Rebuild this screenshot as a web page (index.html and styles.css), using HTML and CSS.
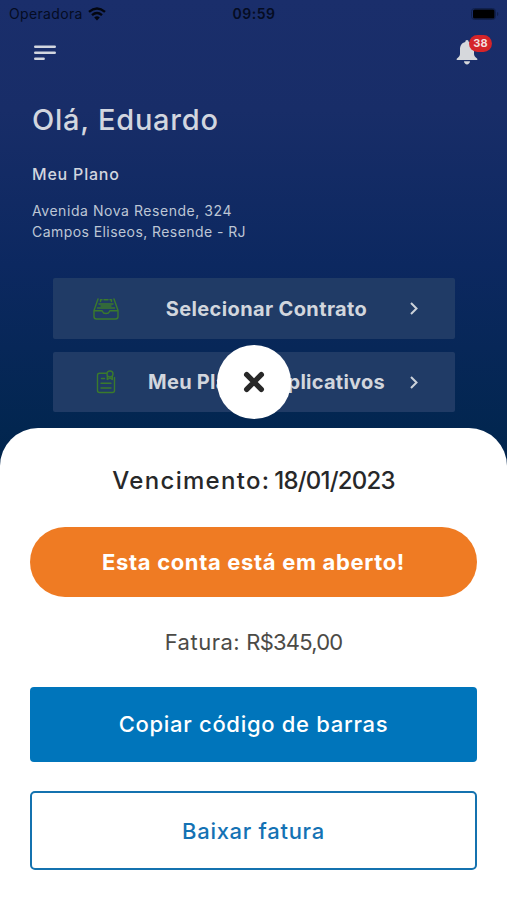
FILE: index.html
```
<!DOCTYPE html>
<html lang="pt-BR">
<head>
<meta charset="utf-8">
<title>Meu Plano</title>
<link rel="stylesheet" href="styles.css">
</head>
<body>
<div class="screen">
  <div class="status">
    <div class="carrier"><span class="carrier-name">Operadora</span>
      <svg width="18" height="14" viewBox="0 0 18 14" fill="none" stroke="#03060f" stroke-width="2.4"><path d="M1 4.8Q9-2 17 4.8M4 8.2Q9 4 14 8.2"/><path d="M9 13.4 6.2 10.5Q9 8.2 11.8 10.5Z" fill="#03060f" stroke="none"/></svg>
    </div>
    <span class="clock">09:59</span>
    <svg class="battery" width="28" height="12" viewBox="0 0 28 12"><rect x=".5" y=".5" width="24" height="11" rx="3" fill="none" stroke="#10204c"/><rect x="2" y="1.5" width="21.5" height="9" rx="1.5" fill="#000"/><path d="M26 4v4q1.4-.6 1.4-2T26 4" fill="#10204c"/></svg>
  </div>
  <header class="topbar">
    <svg class="burger" width="22" height="16" viewBox="0 0 22 16" stroke="#d2d6df" stroke-width="2.6" stroke-linecap="round"><path d="M1.3 1.7h19.4M1.3 7.7h19.4M1.3 13.7h8.3"/></svg>
    <div class="bell">
      <svg width="22" height="26" viewBox="0 0 22 26" fill="#d6d8dc"><path d="M11 1C9.800 1 9.300 1.900 9.300 2.900 5.500 3.800 4 6.800 4 10.500V15C4 17 2.600 18 1 19.600Q0 21 1.200 21H20.800Q22 21 21 19.600C19.400 18 18 17 18 15V10.500C18 6.800 16.500 3.800 12.700 2.900 12.700 1.900 12.200 1 11 1ZM8 22.300C8.400 26.500 13.600 26.500 14 22.300Z"/></svg>
      <span class="badge">38</span>
    </div>
  </header>
  <main class="account">
    <h1>Olá, Eduardo</h1>
    <h2>Meu Plano</h2>
    <p class="line1">Avenida Nova Resende, 324</p>
    <p class="line2">Campos Eliseos, Resende - RJ</p>
  </main>
  <nav class="menu">
    <div class="item">
      <svg class="icon" width="26" height="22" viewBox="0 0 26 22" fill="none" stroke="#3a7a2c" stroke-width="1.4" stroke-linejoin="round" stroke-linecap="round"><path d="M5 .9 1 12.500V18.500Q1 21 3.500 21H22.500Q25 21 25 18.500V12.500L21 .9M1 12.700H8.700Q9.300 12.700 9.500 13.400 10.300 15.500 13 15.500T16.500 13.400Q16.700 12.700 17.300 12.700H25M4.500 10H21.500M6 6H20M7.500 3.500V1.700H9M17 1.700H18.500V3.500M11 1.700H15M8 8H18"/></svg>
      <span class="label contract">Selecionar Contrato</span>
      <svg class="chev" width="8" height="13" viewBox="0 0 8 13" fill="none" stroke="#ccd2da" stroke-width="2"><path d="m1 1 5.500 5.500L1 12"/></svg>
    </div>
    <div class="item">
      <svg class="icon" width="26" height="24" viewBox="0 0 26 24" fill="none" stroke="#3a7a2c" stroke-width="1.4" stroke-linejoin="round" stroke-linecap="round"><path d="M13.500 3.200H6.500Q4.500 3.200 4.500 5.200V20.500Q4.500 22.500 6.500 22.500H19.500Q21.500 22.500 21.500 20.500V7.500M8.500 8.500H11.500M8 13.200H18M8 18H18"/><circle cx="17" cy="4" r="3"/><path d="M14.300 5.800V9.500L17 8 19.300 9.500V6"/></svg>
      <span class="label apps">Meu Plano - Aplicativos</span>
      <svg class="chev" width="8" height="13" viewBox="0 0 8 13" fill="none" stroke="#ccd2da" stroke-width="2"><path d="m1 1 5.500 5.500L1 12"/></svg>
    </div>
  </nav>
  <section class="sheet">
    <button class="close" aria-label="Fechar"><svg width="22" height="22" viewBox="0 0 22 22" stroke="#282828" stroke-width="5.400" stroke-linecap="round"><path d="m3.700 3.700 14.600 14.600M18.300 3.700 3.700 18.300"/></svg></button>
    <div class="due"><span class="due-label">Vencimento:</span> <span class="due-date">18/01/2023</span></div>
    <div class="notice"><span>Esta conta está em aberto!</span></div>
    <div class="amount"><span class="amount-label">Fatura:</span> <span class="amount-value">R$345,00</span></div>
    <button class="copy"><span>Copiar código de barras</span></button>
    <button class="download"><span>Baixar fatura</span></button>
  </section>
</div>
</body>
</html>
```
FILE: styles.css
```
* { box-sizing: border-box; }
body { margin: 0; font-family: Inter, sans-serif; }
h1, h2, p { margin: 0; }
svg { display: block; flex: none; }
button { font-family: inherit; padding: 0; border: 0; }
.screen {
  width: 507px; height: 900px; overflow: hidden;
  display: flex; flex-direction: column;
  background: linear-gradient(#1a2e6b 0, #182d68 110px, #0c2860 265px, #022650 430px, #00244b 470px);
}
.status {
  height: 27px; flex: none; display: grid; grid-template-columns: 1fr auto 1fr;
  align-items: center; padding: 0 8px 0 9px; color: #050c22;
}
.carrier { display: flex; align-items: center; gap: 5px; font-size: 14px; letter-spacing: .35px; }
.clock { font-size: 14px; font-weight: 600; letter-spacing: .5px; }
.battery { justify-self: end; }
.topbar { height: 45px; flex: none; display: flex; justify-content: space-between; padding: 17px 29px 0 34px; }
.burger { margin-top: 1px; }
.bell { position: relative; height: 26px; margin-top: -5px; }
.badge {
  position: absolute; left: 13px; top: -4px; width: 23px; height: 17px;
  border-radius: 9px; background: #d52429; color: #f2dedf;
  font-size: 11px; line-height: 17px; font-weight: 700; text-align: center;
}
.account { height: 206px; flex: none; padding: 28px 32px 0; color: #d2d6df; white-space: nowrap; }
h1 { font-size: 29px; line-height: 40px; font-weight: 500; letter-spacing: .75px; }
h2 { font-size: 16px; line-height: 24px; font-weight: 500; margin-top: 22px; letter-spacing: .8px; }
p { font-size: 14px; line-height: 20px; color: #bdc6d5; }
.line1 { margin-top: 15px; letter-spacing: .55px; }
.line2 { margin-top: 1px; letter-spacing: .43px; }
.menu { width: 402px; margin-left: 53px; display: flex; flex-direction: column; gap: 13px; height: 150px; flex: none; }
.item {
  height: 61px; flex: none; display: grid; grid-template-columns: 26px 1fr 8px;
  align-items: center; padding: 0 37px 0 40px; border-radius: 2px; background: #203b66;
}
.item:last-child { height: 60px; }
.label { justify-self: center; white-space: nowrap; padding-left: 4px; font-size: 20px; font-weight: 700; color: #d2d6dd; }
.contract { letter-spacing: .37px; }
.apps { letter-spacing: .25px; }
.sheet {
  position: relative; flex: 1; padding: 0 30px; background: #fff;
  border-radius: 38px 38px 0 0; display: flex; flex-direction: column; text-align: center; white-space: nowrap;
}
.close {
  position: absolute; left: 217px; top: -83px; width: 74px; height: 74px;
  border-radius: 50%; background: #fff; display: grid; place-items: center;
}
.due { height: 99px; padding-top: 35px; font-size: 24px; line-height: 36px; font-weight: 500; color: #272829; word-spacing: -2.5px; }
.due-label { letter-spacing: 1.3px; }
.due-date { letter-spacing: -.8px; }
.notice { height: 70px; border-radius: 35px; background: #ef7b23; color: #fff; font-size: 22px; line-height: 70px; font-weight: 700; letter-spacing: .65px; }
.amount { height: 90px; line-height: 90px; font-size: 22px; color: #4b4a46; }
.amount-label { letter-spacing: .5px; }
.amount-value { letter-spacing: -.8px; }
.copy { height: 75px; padding-bottom: 2px; border-radius: 4px; background: #0075bb; color: #fff; font-size: 22px; font-weight: 500; letter-spacing: .7px; }
.download { height: 79px; margin-top: 29px; border: 2px solid #1472af; border-radius: 5px; background: #fff; color: #1472b4; font-size: 22px; font-weight: 500; letter-spacing: .7px; }
```
